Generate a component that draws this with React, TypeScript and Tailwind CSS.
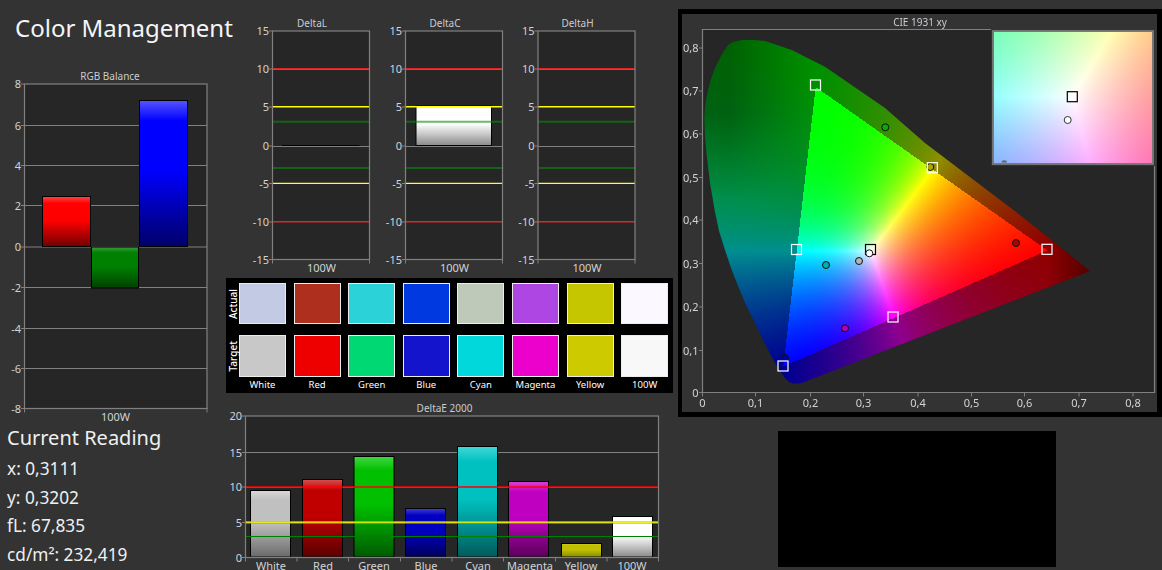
import { useEffect, useRef } from "react";

const GRID = "#808080";
const TXT = "#d0d4d8";

function Defs() {
  const stops = (id: string, s: [number, string][]) => (
    <linearGradient id={id} x1="0" y1="0" x2="0" y2="1" key={id}>
      {s.map(([o, c]) => <stop key={o} offset={o} stopColor={c} />)}
    </linearGradient>
  );
  const g = (id: string, top: string, mid: string, bot: string) =>
    stops(id, [[0, top], [0.14, mid], [0.48, mid], [1, bot]]);
  return (
    <svg width="0" height="0" className="absolute">
      <defs>
        {g("rgbR", "#ff4444", "#ff0000", "#700000")}
        {g("rgbG", "#3c9c3c", "#008000", "#004000")}
        {g("rgbB", "#5555ff", "#0000ff", "#000068")}
        {g("eWhite", "#d8d8d8", "#c0c0c0", "#6a6a6a")}
        {g("eRed", "#d85050", "#c00000", "#5a0000")}
        {g("eGreen", "#40d840", "#00c000", "#005a00")}
        {g("eBlue", "#4040d8", "#0000c0", "#00005a")}
        {g("eCyan", "#40d8d8", "#00c0c0", "#005a5a")}
        {g("eMag", "#d840d8", "#c000c0", "#5a005a")}
        {g("eYel", "#d0d020", "#c0c000", "#8a8a00")}
        {g("eW", "#ffffff", "#ffffff", "#8a8a8a")}
      </defs>
    </svg>
  );
}

function Plot({ l, r, t, b, ticks, xLabels, title, titleX, grid }: {
  l: number; r: number; t: number; b: number;
  ticks: [string, number][]; xLabels: [string, number][]; title: string; titleX: number; grid?: number[];
}) {
  return (
    <g fontSize="11" fill={TXT}>
      <rect x={l} y={t} width={r - l} height={b - t} fill="#262626" />
      <text x={titleX} y={t - 4} textAnchor="middle" fontSize="10" fill="#c8ccd0">{title}</text>
      {(grid ?? []).map((y) => <line key={y} x1={l} x2={r} y1={y} y2={y} stroke={GRID} strokeWidth="1" />)}
      {ticks.map(([s, y]) => (
        <g key={s}>
          <line x1={l - 3.5} x2={l} y1={y} y2={y} stroke={GRID} strokeWidth="1" />
          <text x={l - 3.5} y={y + 4} textAnchor="end">{s}</text>
        </g>
      ))}
      {xLabels.map(([s, x]) => <text key={s} x={x} y={b + 12.5} textAnchor="middle">{s}</text>)}
    </g>
  );
}

function Frame({ l, r, t, b, ends = [] }: { l: number; r: number; t: number; b: number; ends?: number[] }) {
  return (
    <g>
      <rect x={l} y={t} width={r - l} height={b - t} fill="none" stroke={GRID} strokeWidth="1.2" />
      {[l, r, ...ends].map((x) => <line key={x} x1={x} x2={x} y1={b} y2={b + 4} stroke={GRID} strokeWidth="1" />)}
    </g>
  );
}

function Bar({ x, x2, y, y2, fill }: { x: number; x2: number; y: number; y2: number; fill: string }) {
  return <rect x={x} y={y} width={x2 - x} height={y2 - y} fill={`url(#${fill})`} stroke="#000" strokeWidth="1" />;
}

function RgbBalance() {
  const ys: [string, number][] = [["8", 84], ["6", 125.5], ["4", 165.5], ["2", 205.5], ["0", 247], ["-2", 287.5], ["-4", 328.5], ["-6", 368.5], ["-8", 408.5]];
  return (
    <svg width="226" height="359" viewBox="0 66 226 359" className="block">
      <Plot l={24.5} r={207} t={84} b={408.5} ticks={ys} grid={ys.slice(1, -1).map((v) => v[1])} xLabels={[["100W", 115.5]]} title="RGB Balance" titleX={110} />
      <Bar x={42.5} x2={90.5} y={196.5} y2={246.5} fill="rgbR" />
      <Bar x={91.5} x2={138.5} y={247} y2={288} fill="rgbG" />
      <Bar x={139.5} x2={187.5} y={100.5} y2={246.5} fill="rgbB" />
      <Frame l={24.5} r={207} t={84} b={408.5} />
    </svg>
  );
}

function Delta({ name, vx, vw, l, bar, mark }: { name: string; vx: number; vw: number; l: number; bar?: boolean; mark?: boolean }) {
  const r = l + 97;
  const ys: [string, number][] = [["15", 31], ["10", 69], ["5", 107], ["0", 146], ["-5", 183.5], ["-10", 222], ["-15", 259.5]];
  const H = (y: number, c: string, w: number, o = 1) => <line x1={l} x2={r} y1={y} y2={y} stroke={c} strokeWidth={w} opacity={o} />;
  return (
    <svg width={vw} height="278" viewBox={`${vx} 0 ${vw} 278`} className="block shrink-0">
      <Plot l={l} r={r} t={31} b={259.5} ticks={ys} grid={[69.5, 146.5]} xLabels={[["100W", l + 49]]} title={name} titleX={l + 39.5} />
      {mark && <line x1={l + 9.5} x2={l + 87} y1={145.5} y2={145.5} stroke="#000" strokeWidth="1" />}
      {bar && <rect x={l + 10.5} y={106} width={75.5} height={39.5} fill="url(#eWDelta)" stroke="#000" strokeWidth="1" />}
      {bar && (
        <defs>
          <linearGradient id="eWDelta" x1="0" y1="0" x2="0" y2="1">
            <stop offset="0" stopColor="#fff" />
            <stop offset="0.45" stopColor="#fff" />
            <stop offset="1" stopColor="#8a8a8a" />
          </linearGradient>
        </defs>
      )}
      {H(68.7, "#e02020", 1.5)}
      {H(106.7, "#ffff00", 1.5)}
      {H(121.7, "#0a8a0a", 2, 0.6)}
      {H(168, "#0a8a0a", 2, 0.6)}
      {H(183.3, "#ffff30", 1.2)}
      {H(221.8, "#d82828", 1.5)}
      <Frame l={l} r={r} t={31} b={259.5} />
    </svg>
  );
}

const NAMES = ["White", "Red", "Green", "Blue", "Cyan", "Magenta", "Yellow", "100W"];
const ACTUAL = ["#c2cbe3", "#ae2f1e", "#2bd2d8", "#0039e0", "#bfc9b9", "#ae46e3", "#c6c600", "#fcf8ff"];
const TARGET = ["#c8c8c8", "#ee0000", "#00d873", "#1414cc", "#00d8dc", "#ec00cc", "#cdcb00", "#f8f8f8"];

function SwatchRow({ label, colors, h }: { label: string; colors: string[]; h: string }) {
  return (
    <div className={`flex ${h}`}>
      <div className="w-[13px] flex items-center justify-center">
        <span className="[writing-mode:vertical-rl] rotate-180 text-[10px] font-medium leading-none text-white">{label}</span>
      </div>
      <div className="grid grid-cols-[repeat(8,47px)] gap-x-[7.6px]">
        {colors.map((c, i) => <div key={i} className="border border-[#ececec]" style={{ background: c }} />)}
      </div>
    </div>
  );
}

function Swatches() {
  return (
    <div className="w-[447px] h-[115px] bg-black pt-[5px]">
      <SwatchRow label="Actual" colors={ACTUAL} h="h-[41px]" />
      <div className="h-[11px]" />
      <SwatchRow label="Target" colors={TARGET} h="h-[42px]" />
      <div className="flex pl-[13px] pt-[1px]">
        <div className="grid grid-cols-[repeat(8,47px)] gap-x-[7.6px]">
          {NAMES.map((n) => <div key={n} className="text-center text-[9.5px] leading-[14px] text-white">{n}</div>)}
        </div>
      </div>
    </div>
  );
}

function DeltaE() {
  const ys: [string, number][] = [["20", 416], ["15", 452.5], ["10", 487], ["5", 522.5], ["0", 557.5]];
  const bars: [number, number, string][] = [
    [250.5, 490.5, "eWhite"], [302.5, 479.5, "eRed"], [354, 456.5, "eGreen"], [405.5, 508.5, "eBlue"],
    [457.5, 446.5, "eCyan"], [508.5, 481.5, "eMag"], [561.5, 543.5, "eYel"], [612.5, 516.5, "eW"],
  ];
  const lx = [271, 323, 374, 426, 478, 530, 581, 632];
  return (
    <svg width="452" height="177" viewBox="226 393 452 177" className="block">
      <Plot l={245.5} r={658.5} t={416} b={557.5} ticks={ys} grid={[452.5, 487.5, 522.5]} xLabels={NAMES.map((n, i) => [n, lx[i]] as [string, number])} title="DeltaE 2000" titleX={444.5} />
      {bars.map(([x, y, f]) => <Bar key={f} x={x} x2={x + 40} y={y} y2={557} fill={f} />)}
      <line x1={245.5} x2={658.5} y1={487} y2={487} stroke="#ff0000" strokeWidth="1.5" />
      <line x1={245.5} x2={658.5} y1={522.5} y2={522.5} stroke="#b0b000" strokeWidth="3" opacity="0.55" />
      <line x1={245.5} x2={658.5} y1={522.2} y2={522.2} stroke="#ffff00" strokeWidth="1" />
      <line x1={245.5} x2={658.5} y1={536.5} y2={536.5} stroke="#008000" strokeWidth="1.2" />
      <Frame l={245.5} r={658.5} t={416} b={557.5} ends={[297, 348.5, 400.5, 452, 503.5, 555.5, 607]} />
    </svg>
  );
}

const OX = 682, OY = 14;
const LOCUS: [number, number][] = [
  [754, 40], [742, 40], [733, 42], [728, 45], [721, 56], [715, 68], [710, 82], [707, 95], [705, 107], [704.3, 118], [705, 137], [706.7, 155], [710, 183], [715, 212],
  [719, 231], [725, 250], [731, 268], [738.3, 286.7], [746, 305], [755, 323], [763, 340], [771.7, 356.7], [778, 368], [785, 378], [789, 382], [793, 383.6], [799, 383.6], [803, 382.4],
  [1090, 271], [1020, 215], [925, 143], [885, 108], [825, 66.7], [791.7, 50], [765, 41],
];

type M3 = number[][];
function inv(m: M3): M3 {
  const [a, b, c] = m[0], [d, e, f] = m[1], [g, h, i] = m[2];
  const A = e * i - f * h, B = f * g - d * i, C = d * h - e * g;
  const det = a * A + b * B + c * C;
  return [
    [A / det, (c * h - b * i) / det, (b * f - c * e) / det],
    [B / det, (a * i - c * g) / det, (c * d - a * f) / det],
    [C / det, (b * g - a * h) / det, (a * e - b * d) / det],
  ];
}
function toRgbMatrix(): M3 {
  const p = [[0.64, 0.21, 0.15], [0.33, 0.71, 0.06], [0.03, 0.08, 0.79]];
  const w = [0.3127 / 0.329, 1, (1 - 0.3127 - 0.329) / 0.329];
  const ip = inv(p);
  const s = ip.map((r) => r[0] * w[0] + r[1] * w[1] + r[2] * w[2]);
  return inv(p.map((r) => r.map((v, i) => v * s[i])));
}
const MI = toRgbMatrix();
const clamp01 = (v: number) => Math.min(1, Math.max(0, v));

function chroma(x: number, y: number, out: boolean): [number, number, number] {
  const yy = Math.max(y, 0.001);
  const XX = x / yy, ZZ = (1 - x - y) / yy;
  const v = MI.map((r) => r[0] * XX + r[1] + r[2] * ZZ);
  const neg = -Math.min(v[0], v[1], v[2]);
  const c = v.map((q) => Math.max(q, 0));
  const m = Math.max(c[0], c[1], c[2], 1e-6);
  let f = 1;
  let e = out ? [2, 1.1, 1.8] : [1.6, 1.6, 1.6];
  if (neg > 0 && out) {
    f = 0.56 - 0.18 * clamp01((0.2 - x) / 0.15) * clamp01((y - 0.45) / 0.2);
    e = [1.05, 1.05, 1.05];
    if (x > 0.64) f -= (x - 0.64) * 3;
  }
  return [0, 1, 2].map((i) => Math.pow(c[i] / m, e[i]) * 255 * f) as [number, number, number];
}

function paint(cv: HTMLCanvasElement) {
  const W = 475, Hh = 398;
  cv.width = W; cv.height = Hh;
  const ctx = cv.getContext("2d");
  if (!ctx) return;
  ctx.fillStyle = "#262626";
  ctx.fillRect(702.5 - OX, 29.5 - OY, 1154.5 - 702.5, 392.5 - 29.5);

  const off = document.createElement("canvas");
  off.width = W; off.height = Hh;
  const oc = off.getContext("2d")!;
  const img = oc.createImageData(W, Hh);
  for (let j = 0; j < Hh; j++) for (let i = 0; i < W; i++) {
    const px = i + OX + 0.5, py = j + OY + 0.5;
    const [r, g, b] = chroma((px - 702.5) / 539, (392.3 - py) / 430, true);
    const k = (j * W + i) * 4;
    img.data[k] = r; img.data[k + 1] = g; img.data[k + 2] = b; img.data[k + 3] = 255;
  }
  oc.putImageData(img, 0, 0);
  ctx.save();
  ctx.beginPath();
  LOCUS.forEach(([x, y], i) => (i ? ctx.lineTo(x - OX, y - OY) : ctx.moveTo(x - OX, y - OY)));
  ctx.closePath();
  ctx.clip();
  ctx.drawImage(off, 0, 0);
  ctx.restore();

  const x0 = 994, y0 = 32, iw = 158, ih = 131;
  const im2 = ctx.createImageData(iw, ih);
  for (let j = 0; j < ih; j++) for (let i = 0; i < iw; i++) {
    const px = x0 + i + 0.5, py = y0 + j + 0.5;
    const [r, g, b] = chroma(0.3127 + (px - 1072.3) / 2650, 0.329 - (py - 96.7) / 2650, false);
    const k = (j * iw + i) * 4;
    im2.data[k] = r; im2.data[k + 1] = g; im2.data[k + 2] = b; im2.data[k + 3] = 255;
  }
  ctx.putImageData(im2, x0 - OX, y0 - OY);
}

function Square({ x, y, c = "#fff" }: { x: number; y: number; c?: string }) {
  return <rect x={x - 5} y={y - 5} width={10} height={10} fill="none" stroke={c} strokeWidth="1.2" />;
}
function Dot({ x, y, c }: { x: number; y: number; c: string }) {
  return <circle cx={x} cy={y} r={3.5} fill={c} stroke="#111" strokeWidth="1" />;
}

function Cie() {
  const ref = useRef<HTMLCanvasElement>(null);
  useEffect(() => { if (ref.current) paint(ref.current); }, []);
  const xt = [0, 0.1, 0.2, 0.3, 0.4, 0.5, 0.6, 0.7, 0.8];
  const xpos = [702.5, 755.5, 810.5, 863.5, 918, 971.5, 1024.5, 1079, 1133];
  const ypos = [392.5, 350.5, 307, 263.5, 220, 177.5, 134, 91, 48];
  const lab = (v: number) => (v === 0 ? "0" : v.toFixed(1).replace(".", ","));
  return (
    <div className="w-[484px] h-[408px] mt-[9px] border-black border-l-[4px] border-r-[5px] border-t-[5px] border-b-[5px] bg-[#333333]">
      <div className="relative w-[475px] h-[398px]">
        <canvas ref={ref} className="absolute left-0 top-0 block" width={475} height={398} />
        <svg className="absolute left-0 top-0 block" width="475" height="398" viewBox={`${OX} ${OY} 475 398`}>
          <text x={920} y={25.5} textAnchor="middle" fontSize="10" fill="#c8ccd0">CIE 1931 xy</text>
          <path d="M702.5 392.5V29.5H1154.5V392.5Z" fill="none" stroke={GRID} strokeWidth="1.2" />
          {xt.map((v, i) => (
            <g key={v} fontSize="11" fill={TXT}>
              <line x1={xpos[i]} x2={xpos[i]} y1={392.5} y2={396.5} stroke={GRID} />
              <text x={xpos[i]} y={407} textAnchor="middle">{lab(v)}</text>
              <line x1={699} x2={702.5} y1={ypos[i]} y2={ypos[i]} stroke={GRID} />
              <text x={698.5} y={ypos[i] + 4} textAnchor="end">{lab(v)}</text>
            </g>
          ))}
          <Dot x={885.3} y={127.3} c="#00b000" />
          <Dot x={930.3} y={167} c="#a8a800" />
          <Dot x={826} y={265} c="#00b0b0" />
          <Dot x={859} y={261} c="#b4b4b4" />
          <Dot x={845} y={328.3} c="#b000b0" />
          <Dot x={785} y={358} c="#0000a8" />
          <Dot x={1016} y={243} c="#b00000" />
          <Square x={815.5} y={85} />
          <Square x={1047} y={249.3} />
          <Square x={783} y={366} />
          <Square x={796.5} y={249.5} />
          <Square x={893} y={317} />
          <Square x={932.3} y={167.7} />
          <Square x={870.5} y={249.5} c="#000" />
          <Dot x={869.3} y={253.3} c="#ffffff" />
          <rect x={993} y={31} width={160} height={133} fill="none" stroke="#7a7a7a" strokeWidth="2" />
          <rect x={991.5} y={29.5} width={163} height={136} fill="none" stroke="#333" strokeWidth="1.2" />
          <path d="M1001.5 162.5a2.5 2 0 0 1 5.5 0Z" fill="#666" />
          <rect x={1067.3} y={91.7} width={10} height={10} fill="none" stroke="#000" strokeWidth="1.2" />
          <circle cx={1067.7} cy={120} r={3.5} fill="#fff" stroke="#333" strokeWidth="1" />
        </svg>
      </div>
    </div>
  );
}

function BlackBox() {
  return <div className="absolute left-[778px] top-[431px] w-[278px] h-[136px] bg-black" />;
}

export default function App() {
  return (
    <div className="relative flex w-[1162px] h-[570px] overflow-hidden bg-[#333333] font-['Noto_Sans',sans-serif]">
      <Defs />
      <div className="w-[226px] shrink-0 text-white">
        <div className="h-[66px] pl-[15px] pt-[10px] text-[24px] leading-[36px] whitespace-nowrap text-[#f4f6f8]">Color Management</div>
        <RgbBalance />
        <div className="pl-[7px] text-[17.25px] leading-[28.7px] text-[#eef0f2]">
          <div className="text-[20px] leading-[26px] pb-[4px]">Current Reading</div>
          <div>x: 0,3111</div>
          <div>y: 0,3202</div>
          <div>fL: 67,835</div>
          <div>cd/m²: 232,419</div>
        </div>
      </div>
      <div className="w-[452px] shrink-0">
        <div className="flex">
          <Delta name="DeltaL" vx={226} vw={147} l={272.5} mark />
          <Delta name="DeltaC" vx={373} vw={133} l={405.5} bar />
          <Delta name="DeltaH" vx={506} vw={133} l={538} />
        </div>
        <Swatches />
        <DeltaE />
      </div>
      <Cie />
      <BlackBox />
    </div>
  );
}
